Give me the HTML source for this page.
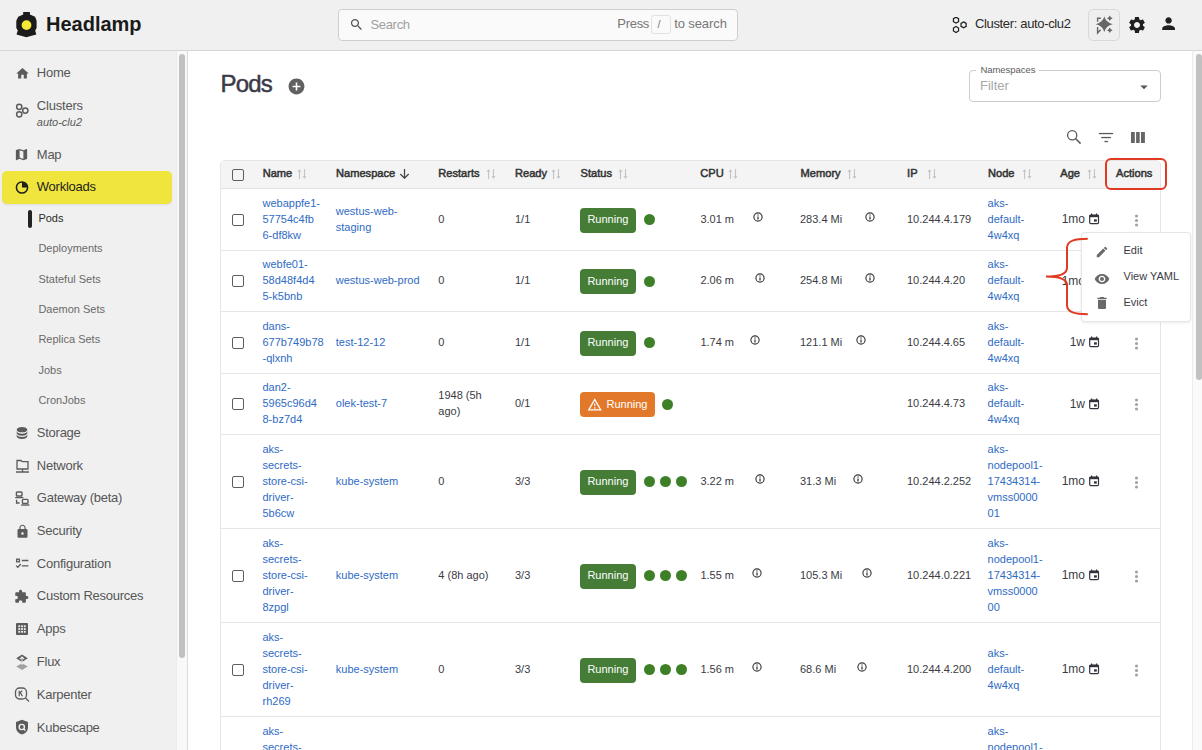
<!DOCTYPE html>
<html><head><meta charset="utf-8"><style>
html,body{margin:0;padding:0;width:1202px;height:750px;overflow:hidden;background:#fff;font-family:"Liberation Sans", sans-serif;}
.a{position:absolute;}
.t{position:absolute;white-space:pre;}
</style></head><body>
<div class="a" style="left:0px;top:0px;width:1202px;height:50px;background:#f0f0f0;"></div>
<div class="a" style="left:0px;top:50px;width:1202px;height:1px;background:#d6d6d6;"></div>
<svg class="a" style="left:12px;top:8px" width="30" height="32" viewBox="0 0 30 32" fill="#5f5f5f"><path d="M11.2 4.1H17.9V6.4L23.1 8.8L24.6 12.8V20.1L23.2 22.6L24.3 26.5L14.3 29.2L4.5 26.5L5.8 22.6L4.3 20.1V12.8L6.2 8.8L11.2 6.4Z" fill="#1b1b1b"/><circle cx="14.5" cy="17.1" r="4.9" fill="#f5e837"/></svg>
<div class="t" style="left:46px;top:13.67px;font-size:20px;line-height:20px;color:#1a1a1a;font-weight:700;">Headlamp</div>
<div class="a" style="left:338px;top:9px;width:400px;height:32px;box-sizing:border-box;border:1px solid #cfcfcf;border-radius:4px;background:#fafafa;"></div>
<svg class="a" style="left:348.5px;top:16.7px" width="15.1" height="15.1" viewBox="0 0 24 24" fill="#555"><path d="M15.5 14h-.79l-.28-.27C15.41 12.59 16 11.11 16 9.5 16 5.91 13.09 3 9.5 3S3 5.91 3 9.5 5.91 16 9.5 16c1.61 0 3.09-.59 4.23-1.57l.27.28v.79l5 4.99L20.49 19l-4.99-5zm-6 0C7.01 14 5 11.99 5 9.5S7.01 5 9.5 5 14 7.01 14 9.5 11.99 14 9.5 14z"/></svg>
<div class="t" style="left:370.4px;top:17.50px;font-size:13px;line-height:13px;color:#a0a0a0;letter-spacing:-0.3px;">Search</div>
<div class="t" style="left:617.3px;top:17.30px;font-size:13px;line-height:13px;color:#777;letter-spacing:-0.3px;">Press</div>
<div class="a" style="left:651px;top:15px;width:20px;height:19px;box-sizing:border-box;border:1px solid #e2e2e2;border-radius:3px;background:#fafafa;"></div>
<div class="t" style="left:657.5px;top:19.49px;font-size:11px;line-height:11px;color:#777;">/</div>
<div class="t" style="left:674.2px;top:17.30px;font-size:13px;line-height:13px;color:#777;letter-spacing:-0.1px;">to search</div>
<svg class="a" style="left:950px;top:17px" width="18" height="17" viewBox="0 0 18 17" fill="#5f5f5f"><g fill="none" stroke="#1e1e1e" stroke-width="1.25"><polygon points="6.00,0.25 8.55,1.73 8.55,4.67 6.00,6.15 3.45,4.67 3.45,1.72"/><polygon points="13.60,4.90 16.15,6.38 16.15,9.32 13.60,10.80 11.05,9.32 11.05,6.37"/><polygon points="6.00,9.55 8.55,11.03 8.55,13.97 6.00,15.45 3.45,13.97 3.45,11.03"/></g></svg>
<div class="t" style="left:975px;top:17.10px;font-size:13px;line-height:13px;color:#2a2a2a;letter-spacing:-0.35px;">Cluster: auto-clu2</div>
<div class="a" style="left:1088px;top:9px;width:32px;height:32px;box-sizing:border-box;border:1px solid #d9d9d9;border-radius:5px;background:#efefef;"></div>
<svg class="a" style="left:1090px;top:11px" width="28" height="28" viewBox="0 0 28 28" fill="#5f5f5f"><path d="M14.3 5.6Q15.9 11.6 22.6 13.2Q15.9 14.8 14.3 20.9Q12.7 14.8 5.8 13.2Q12.7 11.6 14.3 5.6z" fill="#666"/><path d="M19.8 4.5Q20.5 6.6 22.7 7.3Q20.5 8 19.8 10.1Q19.1 8 16.9 7.3Q19.1 6.6 19.8 4.5z" fill="#666"/><path d="M19.8 16.4Q20.5 18.5 22.7 19.2Q20.5 19.9 19.8 22Q19.1 19.9 16.9 19.2Q19.1 18.5 19.8 16.4z" fill="#666"/><path d="M7.6 10.8V7.3H10.8" fill="none" stroke="#666" stroke-width="1.4"/><path d="M7.6 16V22L10.6 18.7" fill="none" stroke="#666" stroke-width="1.4"/></svg>
<svg class="a" style="left:1126.5px;top:14.8px" width="20" height="20" viewBox="0 0 24 24" fill="#1f1f1f"><path d="M19.14,12.94c0.04-0.3,0.06-0.61,0.06-0.94c0-0.32-0.02-0.64-0.07-0.94l2.03-1.58c0.18-0.14,0.23-0.41,0.12-0.61 l-1.92-3.32c-0.12-0.22-0.37-0.29-0.59-0.22l-2.39,0.96c-0.5-0.38-1.03-0.7-1.62-0.94L14.4,2.81c-0.04-0.24-0.24-0.41-0.48-0.41 h-3.840c-0.24,0-0.43,0.17-0.47,0.41L9.25,5.35C8.66,5.59,8.12,5.92,7.63,6.29L5.24,5.33c-0.22-0.08-0.47,0-0.59,0.22L2.74,8.87 C2.62,9.08,2.66,9.34,2.86,9.48l2.03,1.58C4.84,11.36,4.8,11.69,4.8,12s0.02,0.64,0.07,0.94l-2.03,1.58 c-0.18,0.14-0.23,0.41-0.12,0.61l1.92,3.32c0.12,0.22,0.37,0.29,0.59,0.22l2.39-0.96c0.5,0.38,1.03,0.7,1.62,0.94l0.36,2.54 c0.05,0.24,0.24,0.41,0.48,0.41h3.84c0.24,0,0.44-0.17,0.47-0.41l0.36-2.54c0.59-0.24,1.13-0.56,1.62-0.94l2.39,0.96 c0.22,0.08,0.47,0,0.59-0.22l1.92-3.32c0.12-0.22,0.07-0.47-0.12-0.61L19.14,12.94z M12,15.6c-1.98,0-3.6-1.62-3.6-3.6 s1.62-3.6,3.6-3.6s3.6,1.62,3.6,3.6S13.98,15.6,12,15.6z"/></svg>
<svg class="a" style="left:1159.2px;top:14px" width="19.2" height="19.2" viewBox="0 0 24 24" fill="#1f1f1f"><path d="M12 12c2.21 0 4-1.790 4-4s-1.79-4-4-4-4 1.79-4 4 1.79 4 4 4zm0 2c-2.67 0-8 1.34-8 4v2h16v-2c0-2.66-5.33-4-8-4z"/></svg>
<div class="a" style="left:0px;top:51px;width:176px;height:699px;background:#f0f0f0;"></div>
<div class="a" style="left:176px;top:51px;width:11px;height:699px;background:#f9f9f9;box-shadow:inset 1px 0 0 #ececec;"></div>
<div class="a" style="left:187px;top:51px;width:1px;height:699px;background:#dcdcdc;"></div>
<div class="a" style="left:179px;top:54px;width:6px;height:604px;background:#c1c1c1;border-radius:3px;"></div>
<div class="t" style="left:36.8px;top:65.80px;font-size:13px;line-height:13px;color:#565656;letter-spacing:-0.25px;">Home</div>
<svg class="a" style="left:14.5px;top:65.8px" width="15" height="15" viewBox="0 0 24 24" fill="#5b5b5b"><path d="M10 20v-6h4v6h5v-8h3L12 3 2 12h3v8z"/></svg>
<div class="t" style="left:36.8px;top:98.60px;font-size:13px;line-height:13px;color:#565656;letter-spacing:-0.2px;">Clusters</div>
<div class="t" style="left:36.8px;top:116.69px;font-size:11px;line-height:11px;color:#5a5a5a;font-style:italic;">auto-clu2</div>
<svg class="a" style="left:15px;top:103px" width="15" height="15" viewBox="0 0 16 16" fill="#5f5f5f"><g fill="none" stroke="#5b5b5b" stroke-width="1.6"><circle cx="4.5" cy="4" r="2.8"/><circle cx="11" cy="8" r="2.8"/><circle cx="4.5" cy="12" r="2.8"/></g></svg>
<div class="t" style="left:36.8px;top:148.00px;font-size:13px;line-height:13px;color:#565656;letter-spacing:-0.25px;">Map</div>
<svg class="a" style="left:14px;top:147.0px" width="15" height="15" viewBox="0 0 24 24" fill="#5b5b5b"><path d="M15,19L9,16.89V5L15,7.11M20.5,3C20.44,3 20.39,3 20.34,3L15,5.1L9,3L3.36,4.9C3.15,4.97 3,5.15 3,5.38V20.5A0.5,0.5 0 0,0 3.5,21C3.55,21 3.61,21 3.66,21L9,18.9L15,21L20.64,19.1C20.85,19 21,18.85 21,18.62V3.5A0.5,0.5 0 0,0 20.5,3Z"/></svg>
<div class="a" style="left:2px;top:171px;width:169.6px;height:33px;background:#efe53d;border-radius:5px;box-shadow:0 1px 2px rgba(0,0,0,.08);"></div>
<div class="t" style="left:36.8px;top:179.90px;font-size:13px;line-height:13px;color:#1e1e1e;letter-spacing:-0.25px;">Workloads</div>
<svg class="a" style="left:15px;top:181px" width="14" height="13" viewBox="0 0 14 13" fill="#5f5f5f"><circle cx="7" cy="6.5" r="5.6" fill="none" stroke="#1e1e1e" stroke-width="1.5"/><path d="M7 6.5V1.2A5.3 5.3 0 0 1 12.3 6.5z" fill="#1e1e1e"/></svg>
<div class="a" style="left:28px;top:210px;width:3.5px;height:18px;background:#222;border-radius:2px;"></div>
<div class="t" style="left:38.4px;top:212.59px;font-size:11px;line-height:11px;color:#2a2a2a;">Pods</div>
<div class="t" style="left:38.4px;top:243.19px;font-size:11px;line-height:11px;color:#6a6a6a;">Deployments</div>
<div class="t" style="left:38.4px;top:273.59px;font-size:11px;line-height:11px;color:#6a6a6a;">Stateful Sets</div>
<div class="t" style="left:38.4px;top:303.99px;font-size:11px;line-height:11px;color:#6a6a6a;">Daemon Sets</div>
<div class="t" style="left:38.4px;top:334.39px;font-size:11px;line-height:11px;color:#6a6a6a;">Replica Sets</div>
<div class="t" style="left:38.4px;top:364.79px;font-size:11px;line-height:11px;color:#6a6a6a;">Jobs</div>
<div class="t" style="left:38.4px;top:395.19px;font-size:11px;line-height:11px;color:#6a6a6a;">CronJobs</div>
<div class="t" style="left:36.8px;top:425.80px;font-size:13px;line-height:13px;color:#565656;letter-spacing:-0.25px;">Storage</div>
<svg class="a" style="left:14px;top:425.3px" width="16" height="16" viewBox="0 0 24 24" fill="#5b5b5b"><path d="M12,3C7.58,3 4,4.79 4,7C4,9.21 7.58,11 12,11C16.42,11 20,9.21 20,7C20,4.79 16.42,3 12,3M4,9V12C4,14.21 7.58,16 12,16C16.42,16 20,14.21 20,12V9C20,11.21 16.42,13 12,13C7.58,13 4,11.21 4,9M4,14V17C4,19.21 7.58,21 12,21C16.42,21 20,19.21 20,17V14C20,16.21 16.42,18 12,18C7.58,18 4,16.21 4,14Z"/></svg>
<div class="t" style="left:36.8px;top:458.50px;font-size:13px;line-height:13px;color:#565656;letter-spacing:-0.25px;">Network</div>
<svg class="a" style="left:14.5px;top:459.2px" width="15" height="15" viewBox="0 0 15 15" fill="#5f5f5f"><path d="M2 1.5h4l1.2 1.2H13v7.3H2z" fill="none" stroke="#5b5b5b" stroke-width="1.3"/><path d="M7.5 10v2.5M1 13h13" stroke="#5b5b5b" stroke-width="1.3"/></svg>
<div class="t" style="left:36.8px;top:490.80px;font-size:13px;line-height:13px;color:#565656;letter-spacing:-0.25px;">Gateway (beta)</div>
<svg class="a" style="left:14px;top:490.0px" width="16" height="16" viewBox="0 0 16 16" fill="#5f5f5f"><g fill="none" stroke="#5b5b5b" stroke-width="1.4"><rect x="2.4" y="2" width="5.6" height="4" rx=".8"/><path d="M1.2 7.6h8.2M2.6 9.8v3.2h3"/><rect x="8.4" y="9.4" width="5.6" height="4" rx=".8"/><path d="M7.2 15h8.2"/></g></svg>
<div class="t" style="left:36.8px;top:523.90px;font-size:13px;line-height:13px;color:#565656;letter-spacing:-0.25px;">Security</div>
<svg class="a" style="left:14.5px;top:523.9px" width="15" height="15" viewBox="0 0 24 24" fill="#5b5b5b"><path d="M18 8h-1V6c0-2.76-2.24-5-5-5S7 3.24 7 6v2H6c-1.1 0-2 .9-2 2v10c0 1.1.9 2 2 2h12c1.1 0 2-.9 2-2V10c0-1.1-.9-2-2-2zm-6 9c-1.1 0-2-.9-2-2s.9-2 2-2 2 .9 2 2-.9 2-2 2zm3.1-9H8.9V6c0-1.71 1.39-3.1 3.1-3.1 1.71 0 3.1 1.39 3.1 3.1v2z"/></svg>
<div class="t" style="left:36.8px;top:556.60px;font-size:13px;line-height:13px;color:#565656;letter-spacing:-0.25px;">Configuration</div>
<svg class="a" style="left:14.5px;top:556.1px" width="15" height="14" viewBox="0 0 15 14" fill="#5f5f5f"><g fill="none" stroke="#5b5b5b" stroke-width="1.3"><rect x="1.6" y="3.2" width="2.8" height="2.6"/><path d="M6.8 4.5h6.6M6.8 9.8h6.6M1.2 9.6l1.6 1.6 3-3.2"/></g></svg>
<div class="t" style="left:36.8px;top:589.30px;font-size:13px;line-height:13px;color:#565656;letter-spacing:-0.25px;">Custom Resources</div>
<svg class="a" style="left:14px;top:589.3px" width="15" height="15" viewBox="0 0 24 24" fill="#5b5b5b"><path d="M20.5 11H19V7c0-1.1-.9-2-2-2h-4V3.5C13 2.12 11.88 1 10.5 1S8 2.12 8 3.5V5H4c-1.1 0-1.99.9-1.99 2v3.8H3.5c1.49 0 2.7 1.21 2.7 2.7s-1.21 2.7-2.7 2.7H2V20c0 1.1.9 2 2 2h3.8v-1.5c0-1.490 1.21-2.7 2.7-2.7 1.49 0 2.7 1.21 2.7 2.7V22H17c1.1 0 2-.9 2-2v-4h1.5c1.38 0 2.5-1.12 2.5-2.5S21.88 11 20.5 11z"/></svg>
<div class="t" style="left:36.8px;top:622.10px;font-size:13px;line-height:13px;color:#565656;letter-spacing:-0.25px;">Apps</div>
<svg class="a" style="left:16px;top:623.4px" width="12" height="12" viewBox="0 0 13 13" fill="#5f5f5f"><rect x="0" y="0" width="13" height="13" rx="1.2" fill="#5b5b5b"/><g fill="#f0f0f0"><rect x="2.5" y="2.5" width="2" height="2"/><rect x="5.5" y="2.5" width="2" height="2"/><rect x="8.5" y="2.5" width="2" height="2"/><rect x="2.5" y="5.5" width="2" height="2"/><rect x="5.5" y="5.5" width="2" height="2"/><rect x="8.5" y="5.5" width="2" height="2"/><rect x="2.5" y="8.5" width="2" height="2"/><rect x="5.5" y="8.5" width="2" height="2"/><rect x="8.5" y="8.5" width="2" height="2"/></g></svg>
<div class="t" style="left:36.8px;top:655.20px;font-size:13px;line-height:13px;color:#565656;letter-spacing:-0.25px;">Flux</div>
<svg class="a" style="left:15px;top:653.7px" width="14" height="16" viewBox="0 0 14 16" fill="#5f5f5f"><path d="M7 0.5L12.8 4.3 7 8.1 1.2 4.3z" fill="#5b5b5b"/><path d="M4.8 5.2L7 3 9.2 5.2" fill="none" stroke="#f0f0f0" stroke-width="1.2"/><path d="M7 9.2L12.8 12.6 7 16 1.2 12.6z" fill="#a0a0a0"/><path d="M7 4v7" stroke="#f0f0f0" stroke-width="1"/></svg>
<div class="t" style="left:36.8px;top:687.90px;font-size:13px;line-height:13px;color:#565656;letter-spacing:-0.25px;">Karpenter</div>
<svg class="a" style="left:13.5px;top:686.4px" width="17" height="16" viewBox="0 0 17 16" fill="#5f5f5f"><g fill="none" stroke="#5b5b5b" stroke-width="1.3"><rect x="1.5" y="2" width="11" height="11" rx="4"/><path d="M11.5 12l3.5 3.5"/></g><path d="M5.2 4.8v5.4M5.2 7.5l3-2.7M6.4 6.6l2 3.6" stroke="#5b5b5b" stroke-width="1.2" fill="none"/></svg>
<div class="t" style="left:36.8px;top:720.60px;font-size:13px;line-height:13px;color:#565656;letter-spacing:-0.25px;">Kubescape</div>
<svg class="a" style="left:15px;top:719.1px" width="14" height="16" viewBox="0 0 14 16" fill="#5f5f5f"><path d="M7 .8L13 3v5.2c0 3.6-2.6 6.4-6 7.2C3.6 14.6 1 11.8 1 8.2V3z" fill="#5b5b5b"/><circle cx="6.8" cy="8" r="2.6" fill="none" stroke="#f0f0f0" stroke-width="1.4"/><path d="M8.5 9.8l1.8 1.8" stroke="#f0f0f0" stroke-width="1.4"/></svg>
<div class="a" style="left:188px;top:51px;width:1004px;height:699px;background:#fff;"></div>
<div class="a" style="left:1192px;top:51px;width:10px;height:699px;background:#fafafa;box-shadow:inset 1px 0 0 #ececec;"></div>
<div class="a" style="left:1196px;top:54px;width:6px;height:326px;background:#c1c1c1;border-radius:3px;"></div>
<div class="t" style="left:220.5px;top:72.08px;font-size:24px;line-height:24px;color:#3b3b48;letter-spacing:-0.8px;-webkit-text-stroke:0.5px #3b3b48;">Pods</div>
<svg class="a" style="left:286.5px;top:76.7px" width="19" height="19" viewBox="0 0 24 24" fill="#616161"><path d="M12 2C6.48 2 2 6.48 2 12s4.48 10 10 10 10-4.48 10-10S17.52 2 12 2zm5 11h-4v4h-2v-4H7v-2h4V7h2v4h4v2z"/></svg>
<div class="a" style="left:969px;top:70px;width:191.5px;height:32px;box-sizing:border-box;border:1px solid #cdcdcd;border-radius:4px;"></div>
<div class="a" style="left:975.5px;top:64px;width:63px;height:10px;background:#fff;"></div>
<div class="t" style="left:980.4px;top:65.16px;font-size:9.5px;line-height:9.5px;color:#5c5c5c;letter-spacing:-0.05px;">Namespaces</div>
<div class="t" style="left:980px;top:78.70px;font-size:13px;line-height:13px;color:#a8a8a8;">Filter</div>
<svg class="a" style="left:1135px;top:77.5px" width="18" height="18" viewBox="0 0 24 24" fill="#555"><path d="M7 10l5 5 5-5z"/></svg>
<svg class="a" style="left:1064px;top:127px" width="20" height="20" viewBox="0 0 20 20" fill="#5f5f5f"><circle cx="8.2" cy="8.2" r="4.6" fill="none" stroke="#5a5a5a" stroke-width="1.3"/><path d="M11.5 11.5L16.6 16.6" stroke="#5a5a5a" stroke-width="1.5"/></svg>
<svg class="a" style="left:1098px;top:132px" width="16" height="11" viewBox="0 0 16 11" fill="#5a5a5a"><rect x="0.9" y="0.9" width="14.2" height="1.3"/><rect x="3.2" y="4.9" width="9.7" height="1.3"/><rect x="6.5" y="8.9" width="3.4" height="1.3"/></svg>
<svg class="a" style="left:1131px;top:132px" width="14" height="11" viewBox="0 0 14 11" fill="#666"><rect x="0" y="0" width="3.8" height="11"/><rect x="5.1" y="0" width="3.6" height="11"/><rect x="10" y="0" width="3.9" height="11"/></svg>
<div class="a" style="left:220px;top:160px;width:941px;height:600px;box-sizing:border-box;border:1px solid #e5e5e5;border-radius:5px 5px 0 0;"></div>
<div class="a" style="left:221px;top:161px;width:939px;height:27px;background:#f4f4f4;border-radius:4px 4px 0 0;"></div>
<div class="a" style="left:221px;top:188px;width:939px;height:1px;background:#e0e0e0;"></div>
<div class="a" style="left:232px;top:169px;width:12px;height:12px;box-sizing:border-box;border:1.6px solid #5e5e5e;border-radius:2px;"></div>
<div class="t" style="left:262.7px;top:167.80px;font-size:11.1px;line-height:11.1px;color:#333;-webkit-text-stroke:0.5px #333;">Name</div>
<svg class="a" style="left:295.0px;top:168px" width="12" height="12" viewBox="0 0 12 12" fill="#5f5f5f"><path d="M4.5 11V3M9.5 1v8" fill="none" stroke="#c4c4c4" stroke-width="1.1"/><path d="M2.4 3.8L4.5 1.2 6.6 3.8zM7.4 8.2L9.5 10.8 11.6 8.2z" fill="#c4c4c4"/></svg>
<div class="t" style="left:336px;top:167.80px;font-size:11.1px;line-height:11.1px;color:#333;-webkit-text-stroke:0.5px #333;">Namespace</div>
<div class="t" style="left:438.3px;top:167.80px;font-size:11.1px;line-height:11.1px;color:#333;-webkit-text-stroke:0.5px #333;">Restarts</div>
<svg class="a" style="left:483.7px;top:168px" width="12" height="12" viewBox="0 0 12 12" fill="#5f5f5f"><path d="M4.5 11V3M9.5 1v8" fill="none" stroke="#c4c4c4" stroke-width="1.1"/><path d="M2.4 3.8L4.5 1.2 6.6 3.8zM7.4 8.2L9.5 10.8 11.6 8.2z" fill="#c4c4c4"/></svg>
<div class="t" style="left:515px;top:167.80px;font-size:11.1px;line-height:11.1px;color:#333;-webkit-text-stroke:0.5px #333;">Ready</div>
<svg class="a" style="left:549.4000000000001px;top:168px" width="12" height="12" viewBox="0 0 12 12" fill="#5f5f5f"><path d="M4.5 11V3M9.5 1v8" fill="none" stroke="#c4c4c4" stroke-width="1.1"/><path d="M2.4 3.8L4.5 1.2 6.6 3.8zM7.4 8.2L9.5 10.8 11.6 8.2z" fill="#c4c4c4"/></svg>
<div class="t" style="left:580.6px;top:167.80px;font-size:11.1px;line-height:11.1px;color:#333;-webkit-text-stroke:0.5px #333;">Status</div>
<svg class="a" style="left:615.7px;top:168px" width="12" height="12" viewBox="0 0 12 12" fill="#5f5f5f"><path d="M4.5 11V3M9.5 1v8" fill="none" stroke="#c4c4c4" stroke-width="1.1"/><path d="M2.4 3.8L4.5 1.2 6.6 3.8zM7.4 8.2L9.5 10.8 11.6 8.2z" fill="#c4c4c4"/></svg>
<div class="t" style="left:700.3px;top:167.80px;font-size:11.1px;line-height:11.1px;color:#333;-webkit-text-stroke:0.5px #333;">CPU</div>
<svg class="a" style="left:725.7px;top:168px" width="12" height="12" viewBox="0 0 12 12" fill="#5f5f5f"><path d="M4.5 11V3M9.5 1v8" fill="none" stroke="#c4c4c4" stroke-width="1.1"/><path d="M2.4 3.8L4.5 1.2 6.6 3.8zM7.4 8.2L9.5 10.8 11.6 8.2z" fill="#c4c4c4"/></svg>
<div class="t" style="left:800.6px;top:167.80px;font-size:11.1px;line-height:11.1px;color:#333;-webkit-text-stroke:0.5px #333;">Memory</div>
<svg class="a" style="left:845.0px;top:168px" width="12" height="12" viewBox="0 0 12 12" fill="#5f5f5f"><path d="M4.5 11V3M9.5 1v8" fill="none" stroke="#c4c4c4" stroke-width="1.1"/><path d="M2.4 3.8L4.5 1.2 6.6 3.8zM7.4 8.2L9.5 10.8 11.6 8.2z" fill="#c4c4c4"/></svg>
<div class="t" style="left:907.1px;top:167.80px;font-size:11.1px;line-height:11.1px;color:#333;-webkit-text-stroke:0.5px #333;">IP</div>
<svg class="a" style="left:925.1px;top:168px" width="12" height="12" viewBox="0 0 12 12" fill="#5f5f5f"><path d="M4.5 11V3M9.5 1v8" fill="none" stroke="#c4c4c4" stroke-width="1.1"/><path d="M2.4 3.8L4.5 1.2 6.6 3.8zM7.4 8.2L9.5 10.8 11.6 8.2z" fill="#c4c4c4"/></svg>
<div class="t" style="left:988px;top:167.80px;font-size:11.1px;line-height:11.1px;color:#333;-webkit-text-stroke:0.5px #333;">Node</div>
<svg class="a" style="left:1020.0px;top:168px" width="12" height="12" viewBox="0 0 12 12" fill="#5f5f5f"><path d="M4.5 11V3M9.5 1v8" fill="none" stroke="#c4c4c4" stroke-width="1.1"/><path d="M2.4 3.8L4.5 1.2 6.6 3.8zM7.4 8.2L9.5 10.8 11.6 8.2z" fill="#c4c4c4"/></svg>
<div class="t" style="left:1060.3px;top:167.80px;font-size:11.1px;line-height:11.1px;color:#333;-webkit-text-stroke:0.5px #333;">Age</div>
<svg class="a" style="left:1085.0px;top:168px" width="12" height="12" viewBox="0 0 12 12" fill="#5f5f5f"><path d="M4.5 11V3M9.5 1v8" fill="none" stroke="#c4c4c4" stroke-width="1.1"/><path d="M2.4 3.8L4.5 1.2 6.6 3.8zM7.4 8.2L9.5 10.8 11.6 8.2z" fill="#c4c4c4"/></svg>
<div class="t" style="left:1116px;top:167.80px;font-size:11.1px;line-height:11.1px;color:#333;-webkit-text-stroke:0.5px #333;">Actions</div>
<svg class="a" style="left:399px;top:168px" width="11" height="11" viewBox="0 0 11 11" fill="#5f5f5f"><path d="M5.5 1V10M1.3 6L5.5 10.2 9.7 6" fill="none" stroke="#444" stroke-width="1.25"/></svg>
<div class="a" style="left:221px;top:250px;width:939px;height:1px;background:#e6e6e6;"></div>
<div class="a" style="left:221px;top:311px;width:939px;height:1px;background:#e6e6e6;"></div>
<div class="a" style="left:221px;top:373px;width:939px;height:1px;background:#e6e6e6;"></div>
<div class="a" style="left:221px;top:434px;width:939px;height:1px;background:#e6e6e6;"></div>
<div class="a" style="left:221px;top:528px;width:939px;height:1px;background:#e6e6e6;"></div>
<div class="a" style="left:221px;top:622px;width:939px;height:1px;background:#e6e6e6;"></div>
<div class="a" style="left:221px;top:716px;width:939px;height:1px;background:#e6e6e6;"></div>
<div class="a" style="left:232px;top:213.7px;width:12px;height:12px;box-sizing:border-box;border:1.6px solid #5e5e5e;border-radius:2px;"></div>
<div class="t" style="left:262.5px;top:197.74px;font-size:11px;line-height:11px;color:#2f6bc4;">webappfe1-</div>
<div class="t" style="left:262.5px;top:213.69px;font-size:11px;line-height:11px;color:#2f6bc4;">57754c4fb</div>
<div class="t" style="left:262.5px;top:229.64px;font-size:11px;line-height:11px;color:#2f6bc4;">6-df8kw</div>
<div class="t" style="left:335.8px;top:205.71px;font-size:11px;line-height:11px;color:#2f6bc4;">westus-web-</div>
<div class="t" style="left:335.8px;top:221.66px;font-size:11px;line-height:11px;color:#2f6bc4;">staging</div>
<div class="t" style="left:438.3px;top:213.69px;font-size:11px;line-height:11px;color:#3b3b43;">0</div>
<div class="t" style="left:515px;top:213.69px;font-size:11px;line-height:11px;color:#3b3b43;">1/1</div>
<div class="a" style="left:580px;top:207.5px;width:56px;height:25px;background:#457c36;border-radius:4px;"></div>
<div class="t" style="left:587.4px;top:214.49px;font-size:11px;line-height:11px;color:#fff;">Running</div>
<div class="a" style="left:643.5px;top:214.29999999999998px;width:11px;height:11px;background:#3e8027;border-radius:50%;"></div>
<div class="t" style="left:700.4px;top:213.89px;font-size:11px;line-height:11px;color:#3b3b43;">3.01 m</div>
<div class="t" style="left:800px;top:213.89px;font-size:11px;line-height:11px;color:#3b3b43;">283.4 Mi</div>
<div class="t" style="left:907px;top:213.89px;font-size:11px;line-height:11px;color:#3b3b43;">10.244.4.179</div>
<div class="t" style="left:987.6px;top:197.74px;font-size:11px;line-height:11px;color:#2f6bc4;">aks-</div>
<div class="t" style="left:987.6px;top:213.69px;font-size:11px;line-height:11px;color:#2f6bc4;">default-</div>
<div class="t" style="left:987.6px;top:229.64px;font-size:11px;line-height:11px;color:#2f6bc4;">4w4xq</div>
<div class="t" style="left:985px;top:213.14px;font-size:12px;line-height:12px;color:#3b3b43;width:100px;text-align:right;">1mo</div>
<svg class="a" style="left:1088px;top:213.2px" width="12" height="12" viewBox="0 0 12 12" fill="#5f5f5f"><rect x="1.7" y="2.1" width="8.8" height="8.6" rx="1.1" fill="none" stroke="#33333d" stroke-width="1.2"/><rect x="1.4" y="1.9" width="9.4" height="2.3" fill="#33333d"/><path d="M3.6 0.6V2.6M8.6 0.6V2.6" stroke="#33333d" stroke-width="1.2"/><rect x="6" y="6.3" width="2.8" height="2.3" fill="#33333d"/></svg>
<svg class="a" style="left:1126.5px;top:210.5px" width="19" height="19" viewBox="0 0 24 24" fill="#a2a2a2"><circle cx="12" cy="6.3" r="2"/><circle cx="12" cy="12" r="2"/><circle cx="12" cy="17.7" r="2"/></svg>
<div class="a" style="left:232px;top:275.2px;width:12px;height:12px;box-sizing:border-box;border:1.6px solid #5e5e5e;border-radius:2px;"></div>
<div class="t" style="left:262.5px;top:259.24px;font-size:11px;line-height:11px;color:#2f6bc4;">webfe01-</div>
<div class="t" style="left:262.5px;top:275.19px;font-size:11px;line-height:11px;color:#2f6bc4;">58d48f4d4</div>
<div class="t" style="left:262.5px;top:291.14px;font-size:11px;line-height:11px;color:#2f6bc4;">5-k5bnb</div>
<div class="t" style="left:335.8px;top:275.19px;font-size:11px;line-height:11px;color:#2f6bc4;">westus-web-prod</div>
<div class="t" style="left:438.3px;top:275.19px;font-size:11px;line-height:11px;color:#3b3b43;">0</div>
<div class="t" style="left:515px;top:275.19px;font-size:11px;line-height:11px;color:#3b3b43;">1/1</div>
<div class="a" style="left:580px;top:269.0px;width:56px;height:25px;background:#457c36;border-radius:4px;"></div>
<div class="t" style="left:587.4px;top:275.99px;font-size:11px;line-height:11px;color:#fff;">Running</div>
<div class="a" style="left:643.5px;top:275.8px;width:11px;height:11px;background:#3e8027;border-radius:50%;"></div>
<div class="t" style="left:700.4px;top:275.39px;font-size:11px;line-height:11px;color:#3b3b43;">2.06 m</div>
<div class="t" style="left:800px;top:275.39px;font-size:11px;line-height:11px;color:#3b3b43;">254.8 Mi</div>
<div class="t" style="left:907px;top:275.39px;font-size:11px;line-height:11px;color:#3b3b43;">10.244.4.20</div>
<div class="t" style="left:987.6px;top:259.24px;font-size:11px;line-height:11px;color:#2f6bc4;">aks-</div>
<div class="t" style="left:987.6px;top:275.19px;font-size:11px;line-height:11px;color:#2f6bc4;">default-</div>
<div class="t" style="left:987.6px;top:291.14px;font-size:11px;line-height:11px;color:#2f6bc4;">4w4xq</div>
<div class="t" style="left:985px;top:274.64px;font-size:12px;line-height:12px;color:#3b3b43;width:100px;text-align:right;">1mo</div>
<svg class="a" style="left:1088px;top:274.7px" width="12" height="12" viewBox="0 0 12 12" fill="#5f5f5f"><rect x="1.7" y="2.1" width="8.8" height="8.6" rx="1.1" fill="none" stroke="#33333d" stroke-width="1.2"/><rect x="1.4" y="1.9" width="9.4" height="2.3" fill="#33333d"/><path d="M3.6 0.6V2.6M8.6 0.6V2.6" stroke="#33333d" stroke-width="1.2"/><rect x="6" y="6.3" width="2.8" height="2.3" fill="#33333d"/></svg>
<svg class="a" style="left:1126.5px;top:272.0px" width="19" height="19" viewBox="0 0 24 24" fill="#a2a2a2"><circle cx="12" cy="6.3" r="2"/><circle cx="12" cy="12" r="2"/><circle cx="12" cy="17.7" r="2"/></svg>
<div class="a" style="left:232px;top:336.7px;width:12px;height:12px;box-sizing:border-box;border:1.6px solid #5e5e5e;border-radius:2px;"></div>
<div class="t" style="left:262.5px;top:320.74px;font-size:11px;line-height:11px;color:#2f6bc4;">dans-</div>
<div class="t" style="left:262.5px;top:336.69px;font-size:11px;line-height:11px;color:#2f6bc4;">677b749b78</div>
<div class="t" style="left:262.5px;top:352.64px;font-size:11px;line-height:11px;color:#2f6bc4;">-qlxnh</div>
<div class="t" style="left:335.8px;top:336.69px;font-size:11px;line-height:11px;color:#2f6bc4;">test-12-12</div>
<div class="t" style="left:438.3px;top:336.69px;font-size:11px;line-height:11px;color:#3b3b43;">0</div>
<div class="t" style="left:515px;top:336.69px;font-size:11px;line-height:11px;color:#3b3b43;">1/1</div>
<div class="a" style="left:580px;top:330.5px;width:56px;height:25px;background:#457c36;border-radius:4px;"></div>
<div class="t" style="left:587.4px;top:337.49px;font-size:11px;line-height:11px;color:#fff;">Running</div>
<div class="a" style="left:643.5px;top:337.3px;width:11px;height:11px;background:#3e8027;border-radius:50%;"></div>
<div class="t" style="left:700.4px;top:336.89px;font-size:11px;line-height:11px;color:#3b3b43;">1.74 m</div>
<div class="t" style="left:800px;top:336.89px;font-size:11px;line-height:11px;color:#3b3b43;">121.1 Mi</div>
<div class="t" style="left:907px;top:336.89px;font-size:11px;line-height:11px;color:#3b3b43;">10.244.4.65</div>
<div class="t" style="left:987.6px;top:320.74px;font-size:11px;line-height:11px;color:#2f6bc4;">aks-</div>
<div class="t" style="left:987.6px;top:336.69px;font-size:11px;line-height:11px;color:#2f6bc4;">default-</div>
<div class="t" style="left:987.6px;top:352.64px;font-size:11px;line-height:11px;color:#2f6bc4;">4w4xq</div>
<div class="t" style="left:985px;top:336.14px;font-size:12px;line-height:12px;color:#3b3b43;width:100px;text-align:right;">1w</div>
<svg class="a" style="left:1088px;top:336.2px" width="12" height="12" viewBox="0 0 12 12" fill="#5f5f5f"><rect x="1.7" y="2.1" width="8.8" height="8.6" rx="1.1" fill="none" stroke="#33333d" stroke-width="1.2"/><rect x="1.4" y="1.9" width="9.4" height="2.3" fill="#33333d"/><path d="M3.6 0.6V2.6M8.6 0.6V2.6" stroke="#33333d" stroke-width="1.2"/><rect x="6" y="6.3" width="2.8" height="2.3" fill="#33333d"/></svg>
<svg class="a" style="left:1126.5px;top:333.5px" width="19" height="19" viewBox="0 0 24 24" fill="#a2a2a2"><circle cx="12" cy="6.3" r="2"/><circle cx="12" cy="12" r="2"/><circle cx="12" cy="17.7" r="2"/></svg>
<div class="a" style="left:232px;top:398.2px;width:12px;height:12px;box-sizing:border-box;border:1.6px solid #5e5e5e;border-radius:2px;"></div>
<div class="t" style="left:262.5px;top:382.24px;font-size:11px;line-height:11px;color:#2f6bc4;">dan2-</div>
<div class="t" style="left:262.5px;top:398.19px;font-size:11px;line-height:11px;color:#2f6bc4;">5965c96d4</div>
<div class="t" style="left:262.5px;top:414.14px;font-size:11px;line-height:11px;color:#2f6bc4;">8-bz7d4</div>
<div class="t" style="left:335.8px;top:398.19px;font-size:11px;line-height:11px;color:#2f6bc4;">olek-test-7</div>
<div class="t" style="left:438.3px;top:390.21px;font-size:11px;line-height:11px;color:#3b3b43;">1948 (5h</div>
<div class="t" style="left:438.3px;top:406.16px;font-size:11px;line-height:11px;color:#3b3b43;">ago)</div>
<div class="t" style="left:515px;top:398.19px;font-size:11px;line-height:11px;color:#3b3b43;">0/1</div>
<div class="a" style="left:580px;top:392.0px;width:75px;height:25px;background:#e2792a;border-radius:4px;"></div>
<svg class="a" style="left:587px;top:396.5px" width="15.5" height="15.5" viewBox="0 0 24 24" fill="#fff"><path d="M12 5.99L19.53 19H4.47L12 5.99M12 2L1 21h22L12 2zm1 14h-2v2h2v-2zm0-6h-2v4h2v-4z"/></svg>
<div class="t" style="left:606.5px;top:398.99px;font-size:11px;line-height:11px;color:#fff;">Running</div>
<div class="a" style="left:662px;top:398.8px;width:11px;height:11px;background:#3e8027;border-radius:50%;"></div>
<div class="t" style="left:907px;top:398.39px;font-size:11px;line-height:11px;color:#3b3b43;">10.244.4.73</div>
<div class="t" style="left:987.6px;top:382.24px;font-size:11px;line-height:11px;color:#2f6bc4;">aks-</div>
<div class="t" style="left:987.6px;top:398.19px;font-size:11px;line-height:11px;color:#2f6bc4;">default-</div>
<div class="t" style="left:987.6px;top:414.14px;font-size:11px;line-height:11px;color:#2f6bc4;">4w4xq</div>
<div class="t" style="left:985px;top:397.64px;font-size:12px;line-height:12px;color:#3b3b43;width:100px;text-align:right;">1w</div>
<svg class="a" style="left:1088px;top:397.7px" width="12" height="12" viewBox="0 0 12 12" fill="#5f5f5f"><rect x="1.7" y="2.1" width="8.8" height="8.6" rx="1.1" fill="none" stroke="#33333d" stroke-width="1.2"/><rect x="1.4" y="1.9" width="9.4" height="2.3" fill="#33333d"/><path d="M3.6 0.6V2.6M8.6 0.6V2.6" stroke="#33333d" stroke-width="1.2"/><rect x="6" y="6.3" width="2.8" height="2.3" fill="#33333d"/></svg>
<svg class="a" style="left:1126.5px;top:395.0px" width="19" height="19" viewBox="0 0 24 24" fill="#a2a2a2"><circle cx="12" cy="6.3" r="2"/><circle cx="12" cy="12" r="2"/><circle cx="12" cy="17.7" r="2"/></svg>
<div class="a" style="left:232px;top:475.7px;width:12px;height:12px;box-sizing:border-box;border:1.6px solid #5e5e5e;border-radius:2px;"></div>
<div class="t" style="left:262.5px;top:443.79px;font-size:11px;line-height:11px;color:#2f6bc4;">aks-</div>
<div class="t" style="left:262.5px;top:459.74px;font-size:11px;line-height:11px;color:#2f6bc4;">secrets-</div>
<div class="t" style="left:262.5px;top:475.69px;font-size:11px;line-height:11px;color:#2f6bc4;">store-csi-</div>
<div class="t" style="left:262.5px;top:491.64px;font-size:11px;line-height:11px;color:#2f6bc4;">driver-</div>
<div class="t" style="left:262.5px;top:507.59px;font-size:11px;line-height:11px;color:#2f6bc4;">5b6cw</div>
<div class="t" style="left:335.8px;top:475.69px;font-size:11px;line-height:11px;color:#2f6bc4;">kube-system</div>
<div class="t" style="left:438.3px;top:475.69px;font-size:11px;line-height:11px;color:#3b3b43;">0</div>
<div class="t" style="left:515px;top:475.69px;font-size:11px;line-height:11px;color:#3b3b43;">3/3</div>
<div class="a" style="left:580px;top:469.5px;width:56px;height:25px;background:#457c36;border-radius:4px;"></div>
<div class="t" style="left:587.4px;top:476.49px;font-size:11px;line-height:11px;color:#fff;">Running</div>
<div class="a" style="left:643.5px;top:476.3px;width:11px;height:11px;background:#3e8027;border-radius:50%;"></div>
<div class="a" style="left:659.5px;top:476.3px;width:11px;height:11px;background:#3e8027;border-radius:50%;"></div>
<div class="a" style="left:675.5px;top:476.3px;width:11px;height:11px;background:#3e8027;border-radius:50%;"></div>
<div class="t" style="left:700.4px;top:475.89px;font-size:11px;line-height:11px;color:#3b3b43;">3.22 m</div>
<div class="t" style="left:800px;top:475.89px;font-size:11px;line-height:11px;color:#3b3b43;">31.3 Mi</div>
<div class="t" style="left:907px;top:475.89px;font-size:11px;line-height:11px;color:#3b3b43;">10.244.2.252</div>
<div class="t" style="left:987.6px;top:443.79px;font-size:11px;line-height:11px;color:#2f6bc4;">aks-</div>
<div class="t" style="left:987.6px;top:459.74px;font-size:11px;line-height:11px;color:#2f6bc4;">nodepool1-</div>
<div class="t" style="left:987.6px;top:475.69px;font-size:11px;line-height:11px;color:#2f6bc4;">17434314-</div>
<div class="t" style="left:987.6px;top:491.64px;font-size:11px;line-height:11px;color:#2f6bc4;">vmss0000</div>
<div class="t" style="left:987.6px;top:507.59px;font-size:11px;line-height:11px;color:#2f6bc4;">01</div>
<div class="t" style="left:985px;top:475.14px;font-size:12px;line-height:12px;color:#3b3b43;width:100px;text-align:right;">1mo</div>
<svg class="a" style="left:1088px;top:475.2px" width="12" height="12" viewBox="0 0 12 12" fill="#5f5f5f"><rect x="1.7" y="2.1" width="8.8" height="8.6" rx="1.1" fill="none" stroke="#33333d" stroke-width="1.2"/><rect x="1.4" y="1.9" width="9.4" height="2.3" fill="#33333d"/><path d="M3.6 0.6V2.6M8.6 0.6V2.6" stroke="#33333d" stroke-width="1.2"/><rect x="6" y="6.3" width="2.8" height="2.3" fill="#33333d"/></svg>
<svg class="a" style="left:1126.5px;top:472.5px" width="19" height="19" viewBox="0 0 24 24" fill="#a2a2a2"><circle cx="12" cy="6.3" r="2"/><circle cx="12" cy="12" r="2"/><circle cx="12" cy="17.7" r="2"/></svg>
<div class="a" style="left:232px;top:569.7px;width:12px;height:12px;box-sizing:border-box;border:1.6px solid #5e5e5e;border-radius:2px;"></div>
<div class="t" style="left:262.5px;top:537.79px;font-size:11px;line-height:11px;color:#2f6bc4;">aks-</div>
<div class="t" style="left:262.5px;top:553.74px;font-size:11px;line-height:11px;color:#2f6bc4;">secrets-</div>
<div class="t" style="left:262.5px;top:569.69px;font-size:11px;line-height:11px;color:#2f6bc4;">store-csi-</div>
<div class="t" style="left:262.5px;top:585.64px;font-size:11px;line-height:11px;color:#2f6bc4;">driver-</div>
<div class="t" style="left:262.5px;top:601.59px;font-size:11px;line-height:11px;color:#2f6bc4;">8zpgl</div>
<div class="t" style="left:335.8px;top:569.69px;font-size:11px;line-height:11px;color:#2f6bc4;">kube-system</div>
<div class="t" style="left:438.3px;top:569.69px;font-size:11px;line-height:11px;color:#3b3b43;">4 (8h ago)</div>
<div class="t" style="left:515px;top:569.69px;font-size:11px;line-height:11px;color:#3b3b43;">3/3</div>
<div class="a" style="left:580px;top:563.5px;width:56px;height:25px;background:#457c36;border-radius:4px;"></div>
<div class="t" style="left:587.4px;top:570.49px;font-size:11px;line-height:11px;color:#fff;">Running</div>
<div class="a" style="left:643.5px;top:570.3000000000001px;width:11px;height:11px;background:#3e8027;border-radius:50%;"></div>
<div class="a" style="left:659.5px;top:570.3000000000001px;width:11px;height:11px;background:#3e8027;border-radius:50%;"></div>
<div class="a" style="left:675.5px;top:570.3000000000001px;width:11px;height:11px;background:#3e8027;border-radius:50%;"></div>
<div class="t" style="left:700.4px;top:569.89px;font-size:11px;line-height:11px;color:#3b3b43;">1.55 m</div>
<div class="t" style="left:800px;top:569.89px;font-size:11px;line-height:11px;color:#3b3b43;">105.3 Mi</div>
<div class="t" style="left:907px;top:569.89px;font-size:11px;line-height:11px;color:#3b3b43;">10.244.0.221</div>
<div class="t" style="left:987.6px;top:537.79px;font-size:11px;line-height:11px;color:#2f6bc4;">aks-</div>
<div class="t" style="left:987.6px;top:553.74px;font-size:11px;line-height:11px;color:#2f6bc4;">nodepool1-</div>
<div class="t" style="left:987.6px;top:569.69px;font-size:11px;line-height:11px;color:#2f6bc4;">17434314-</div>
<div class="t" style="left:987.6px;top:585.64px;font-size:11px;line-height:11px;color:#2f6bc4;">vmss0000</div>
<div class="t" style="left:987.6px;top:601.59px;font-size:11px;line-height:11px;color:#2f6bc4;">00</div>
<div class="t" style="left:985px;top:569.14px;font-size:12px;line-height:12px;color:#3b3b43;width:100px;text-align:right;">1mo</div>
<svg class="a" style="left:1088px;top:569.2px" width="12" height="12" viewBox="0 0 12 12" fill="#5f5f5f"><rect x="1.7" y="2.1" width="8.8" height="8.6" rx="1.1" fill="none" stroke="#33333d" stroke-width="1.2"/><rect x="1.4" y="1.9" width="9.4" height="2.3" fill="#33333d"/><path d="M3.6 0.6V2.6M8.6 0.6V2.6" stroke="#33333d" stroke-width="1.2"/><rect x="6" y="6.3" width="2.8" height="2.3" fill="#33333d"/></svg>
<svg class="a" style="left:1126.5px;top:566.5px" width="19" height="19" viewBox="0 0 24 24" fill="#a2a2a2"><circle cx="12" cy="6.3" r="2"/><circle cx="12" cy="12" r="2"/><circle cx="12" cy="17.7" r="2"/></svg>
<div class="a" style="left:232px;top:663.7px;width:12px;height:12px;box-sizing:border-box;border:1.6px solid #5e5e5e;border-radius:2px;"></div>
<div class="t" style="left:262.5px;top:631.79px;font-size:11px;line-height:11px;color:#2f6bc4;">aks-</div>
<div class="t" style="left:262.5px;top:647.74px;font-size:11px;line-height:11px;color:#2f6bc4;">secrets-</div>
<div class="t" style="left:262.5px;top:663.69px;font-size:11px;line-height:11px;color:#2f6bc4;">store-csi-</div>
<div class="t" style="left:262.5px;top:679.64px;font-size:11px;line-height:11px;color:#2f6bc4;">driver-</div>
<div class="t" style="left:262.5px;top:695.59px;font-size:11px;line-height:11px;color:#2f6bc4;">rh269</div>
<div class="t" style="left:335.8px;top:663.69px;font-size:11px;line-height:11px;color:#2f6bc4;">kube-system</div>
<div class="t" style="left:438.3px;top:663.69px;font-size:11px;line-height:11px;color:#3b3b43;">0</div>
<div class="t" style="left:515px;top:663.69px;font-size:11px;line-height:11px;color:#3b3b43;">3/3</div>
<div class="a" style="left:580px;top:657.5px;width:56px;height:25px;background:#457c36;border-radius:4px;"></div>
<div class="t" style="left:587.4px;top:664.49px;font-size:11px;line-height:11px;color:#fff;">Running</div>
<div class="a" style="left:643.5px;top:664.3000000000001px;width:11px;height:11px;background:#3e8027;border-radius:50%;"></div>
<div class="a" style="left:659.5px;top:664.3000000000001px;width:11px;height:11px;background:#3e8027;border-radius:50%;"></div>
<div class="a" style="left:675.5px;top:664.3000000000001px;width:11px;height:11px;background:#3e8027;border-radius:50%;"></div>
<div class="t" style="left:700.4px;top:663.89px;font-size:11px;line-height:11px;color:#3b3b43;">1.56 m</div>
<div class="t" style="left:800px;top:663.89px;font-size:11px;line-height:11px;color:#3b3b43;">68.6 Mi</div>
<div class="t" style="left:907px;top:663.89px;font-size:11px;line-height:11px;color:#3b3b43;">10.244.4.200</div>
<div class="t" style="left:987.6px;top:647.74px;font-size:11px;line-height:11px;color:#2f6bc4;">aks-</div>
<div class="t" style="left:987.6px;top:663.69px;font-size:11px;line-height:11px;color:#2f6bc4;">default-</div>
<div class="t" style="left:987.6px;top:679.64px;font-size:11px;line-height:11px;color:#2f6bc4;">4w4xq</div>
<div class="t" style="left:985px;top:663.14px;font-size:12px;line-height:12px;color:#3b3b43;width:100px;text-align:right;">1mo</div>
<svg class="a" style="left:1088px;top:663.2px" width="12" height="12" viewBox="0 0 12 12" fill="#5f5f5f"><rect x="1.7" y="2.1" width="8.8" height="8.6" rx="1.1" fill="none" stroke="#33333d" stroke-width="1.2"/><rect x="1.4" y="1.9" width="9.4" height="2.3" fill="#33333d"/><path d="M3.6 0.6V2.6M8.6 0.6V2.6" stroke="#33333d" stroke-width="1.2"/><rect x="6" y="6.3" width="2.8" height="2.3" fill="#33333d"/></svg>
<svg class="a" style="left:1126.5px;top:660.5px" width="19" height="19" viewBox="0 0 24 24" fill="#a2a2a2"><circle cx="12" cy="6.3" r="2"/><circle cx="12" cy="12" r="2"/><circle cx="12" cy="17.7" r="2"/></svg>
<div class="a" style="left:232px;top:757.7px;width:12px;height:12px;box-sizing:border-box;border:1.6px solid #5e5e5e;border-radius:2px;"></div>
<div class="t" style="left:262.5px;top:725.79px;font-size:11px;line-height:11px;color:#2f6bc4;">aks-</div>
<div class="t" style="left:262.5px;top:741.74px;font-size:11px;line-height:11px;color:#2f6bc4;">secrets-</div>
<div class="t" style="left:262.5px;top:757.69px;font-size:11px;line-height:11px;color:#2f6bc4;">store-csi-</div>
<div class="t" style="left:262.5px;top:773.64px;font-size:11px;line-height:11px;color:#2f6bc4;">driver-</div>
<div class="t" style="left:262.5px;top:789.59px;font-size:11px;line-height:11px;color:#2f6bc4;">xxxxx</div>
<div class="t" style="left:335.8px;top:757.69px;font-size:11px;line-height:11px;color:#2f6bc4;">kube-system</div>
<div class="t" style="left:438.3px;top:757.69px;font-size:11px;line-height:11px;color:#3b3b43;">0</div>
<div class="t" style="left:515px;top:757.69px;font-size:11px;line-height:11px;color:#3b3b43;">3/3</div>
<div class="a" style="left:580px;top:751.5px;width:56px;height:25px;background:#457c36;border-radius:4px;"></div>
<div class="t" style="left:587.4px;top:758.49px;font-size:11px;line-height:11px;color:#fff;">Running</div>
<div class="a" style="left:643.5px;top:758.3000000000001px;width:11px;height:11px;background:#3e8027;border-radius:50%;"></div>
<div class="a" style="left:659.5px;top:758.3000000000001px;width:11px;height:11px;background:#3e8027;border-radius:50%;"></div>
<div class="a" style="left:675.5px;top:758.3000000000001px;width:11px;height:11px;background:#3e8027;border-radius:50%;"></div>
<div class="t" style="left:700.4px;top:757.89px;font-size:11px;line-height:11px;color:#3b3b43;">1.50 m</div>
<div class="t" style="left:800px;top:757.89px;font-size:11px;line-height:11px;color:#3b3b43;">70.1 Mi</div>
<div class="t" style="left:907px;top:757.89px;font-size:11px;line-height:11px;color:#3b3b43;">10.244.4.201</div>
<div class="t" style="left:987.6px;top:725.79px;font-size:11px;line-height:11px;color:#2f6bc4;">aks-</div>
<div class="t" style="left:987.6px;top:741.74px;font-size:11px;line-height:11px;color:#2f6bc4;">nodepool1-</div>
<div class="t" style="left:987.6px;top:757.69px;font-size:11px;line-height:11px;color:#2f6bc4;">17434314-</div>
<div class="t" style="left:987.6px;top:773.64px;font-size:11px;line-height:11px;color:#2f6bc4;">vmss0000</div>
<div class="t" style="left:987.6px;top:789.59px;font-size:11px;line-height:11px;color:#2f6bc4;">01</div>
<div class="t" style="left:985px;top:757.14px;font-size:12px;line-height:12px;color:#3b3b43;width:100px;text-align:right;">1mo</div>
<svg class="a" style="left:1088px;top:757.2px" width="12" height="12" viewBox="0 0 12 12" fill="#5f5f5f"><rect x="1.7" y="2.1" width="8.8" height="8.6" rx="1.1" fill="none" stroke="#33333d" stroke-width="1.2"/><rect x="1.4" y="1.9" width="9.4" height="2.3" fill="#33333d"/><path d="M3.6 0.6V2.6M8.6 0.6V2.6" stroke="#33333d" stroke-width="1.2"/><rect x="6" y="6.3" width="2.8" height="2.3" fill="#33333d"/></svg>
<svg class="a" style="left:1126.5px;top:754.5px" width="19" height="19" viewBox="0 0 24 24" fill="#a2a2a2"><circle cx="12" cy="6.3" r="2"/><circle cx="12" cy="12" r="2"/><circle cx="12" cy="17.7" r="2"/></svg>
<svg class="a" style="left:752.8px;top:211.5px" width="10" height="10" viewBox="0 0 10 10" fill="#5f5f5f"><circle cx="5" cy="5" r="4.1" fill="none" stroke="#383838" stroke-width="1.15"/><path d="M5 4.4v3" stroke="#383838" stroke-width="1.3"/><circle cx="5" cy="3" r=".7" fill="#383838"/></svg>
<svg class="a" style="left:864.5px;top:211.5px" width="10" height="10" viewBox="0 0 10 10" fill="#5f5f5f"><circle cx="5" cy="5" r="4.1" fill="none" stroke="#383838" stroke-width="1.15"/><path d="M5 4.4v3" stroke="#383838" stroke-width="1.3"/><circle cx="5" cy="3" r=".7" fill="#383838"/></svg>
<svg class="a" style="left:755.3px;top:273.0px" width="10" height="10" viewBox="0 0 10 10" fill="#5f5f5f"><circle cx="5" cy="5" r="4.1" fill="none" stroke="#383838" stroke-width="1.15"/><path d="M5 4.4v3" stroke="#383838" stroke-width="1.3"/><circle cx="5" cy="3" r=".7" fill="#383838"/></svg>
<svg class="a" style="left:864.5px;top:273.0px" width="10" height="10" viewBox="0 0 10 10" fill="#5f5f5f"><circle cx="5" cy="5" r="4.1" fill="none" stroke="#383838" stroke-width="1.15"/><path d="M5 4.4v3" stroke="#383838" stroke-width="1.3"/><circle cx="5" cy="3" r=".7" fill="#383838"/></svg>
<svg class="a" style="left:749.5px;top:334.5px" width="10" height="10" viewBox="0 0 10 10" fill="#5f5f5f"><circle cx="5" cy="5" r="4.1" fill="none" stroke="#383838" stroke-width="1.15"/><path d="M5 4.4v3" stroke="#383838" stroke-width="1.3"/><circle cx="5" cy="3" r=".7" fill="#383838"/></svg>
<svg class="a" style="left:855.6999999999999px;top:334.5px" width="10" height="10" viewBox="0 0 10 10" fill="#5f5f5f"><circle cx="5" cy="5" r="4.1" fill="none" stroke="#383838" stroke-width="1.15"/><path d="M5 4.4v3" stroke="#383838" stroke-width="1.3"/><circle cx="5" cy="3" r=".7" fill="#383838"/></svg>
<svg class="a" style="left:754.8px;top:473.5px" width="10" height="10" viewBox="0 0 10 10" fill="#5f5f5f"><circle cx="5" cy="5" r="4.1" fill="none" stroke="#383838" stroke-width="1.15"/><path d="M5 4.4v3" stroke="#383838" stroke-width="1.3"/><circle cx="5" cy="3" r=".7" fill="#383838"/></svg>
<svg class="a" style="left:852.8px;top:473.5px" width="10" height="10" viewBox="0 0 10 10" fill="#5f5f5f"><circle cx="5" cy="5" r="4.1" fill="none" stroke="#383838" stroke-width="1.15"/><path d="M5 4.4v3" stroke="#383838" stroke-width="1.3"/><circle cx="5" cy="3" r=".7" fill="#383838"/></svg>
<svg class="a" style="left:751.8px;top:567.5px" width="10" height="10" viewBox="0 0 10 10" fill="#5f5f5f"><circle cx="5" cy="5" r="4.1" fill="none" stroke="#383838" stroke-width="1.15"/><path d="M5 4.4v3" stroke="#383838" stroke-width="1.3"/><circle cx="5" cy="3" r=".7" fill="#383838"/></svg>
<svg class="a" style="left:861.8px;top:567.5px" width="10" height="10" viewBox="0 0 10 10" fill="#5f5f5f"><circle cx="5" cy="5" r="4.1" fill="none" stroke="#383838" stroke-width="1.15"/><path d="M5 4.4v3" stroke="#383838" stroke-width="1.3"/><circle cx="5" cy="3" r=".7" fill="#383838"/></svg>
<svg class="a" style="left:751.8px;top:661.5px" width="10" height="10" viewBox="0 0 10 10" fill="#5f5f5f"><circle cx="5" cy="5" r="4.1" fill="none" stroke="#383838" stroke-width="1.15"/><path d="M5 4.4v3" stroke="#383838" stroke-width="1.3"/><circle cx="5" cy="3" r=".7" fill="#383838"/></svg>
<svg class="a" style="left:856.8px;top:661.5px" width="10" height="10" viewBox="0 0 10 10" fill="#5f5f5f"><circle cx="5" cy="5" r="4.1" fill="none" stroke="#383838" stroke-width="1.15"/><path d="M5 4.4v3" stroke="#383838" stroke-width="1.3"/><circle cx="5" cy="3" r=".7" fill="#383838"/></svg>
<div class="a" style="left:1105px;top:157.5px;width:62px;height:32.5px;box-sizing:border-box;border:2px solid #e03a22;border-radius:6px;"></div>
<div class="a" style="left:1081px;top:232px;width:110px;height:90px;background:#fff;border-radius:4px;box-sizing:border-box;border:1px solid #e6e6e6;box-shadow:0 1px 3px rgba(0,0,0,.08);"></div>
<svg class="a" style="left:1095px;top:245px" width="14" height="14" viewBox="0 0 24 24" fill="#6a6a6a"><path d="M3 17.25V21h3.75L17.81 9.94l-3.75-3.75L3 17.25zM20.71 7.04c.39-.39.39-1.02 0-1.41l-2.34-2.34c-.39-.39-1.02-.39-1.41 0l-1.83 1.83 3.75 3.75 1.83-1.83z"/></svg>
<div class="t" style="left:1123.5px;top:245.49px;font-size:11px;line-height:11px;color:#3b3b43;">Edit</div>
<svg class="a" style="left:1094px;top:271px" width="16" height="16" viewBox="0 0 24 24" fill="#6a6a6a"><path d="M12 4.5C7 4.5 2.73 7.61 1 12c1.73 4.39 6 7.5 11 7.5s9.27-3.11 11-7.5c-1.73-4.39-6-7.5-11-7.5zM12 17c-2.76 0-5-2.24-5-5s2.24-5 5-5 5 2.24 5 5-2.24 5-5 5zm0-8c-1.66 0-3 1.34-3 3s1.34 3 3 3 3-1.34 3-3-1.34-3-3-3z"/></svg>
<div class="t" style="left:1123.5px;top:271.29px;font-size:11px;line-height:11px;color:#3b3b43;">View YAML</div>
<svg class="a" style="left:1094px;top:295px" width="16" height="16" viewBox="0 0 24 24" fill="#6a6a6a"><path d="M6 19c0 1.1.9 2 2 2h8c1.1 0 2-.9 2-2V7H6v12zM19 4h-3.5l-1-1h-5l-1 1H5v2h14V4z"/></svg>
<div class="t" style="left:1123.5px;top:297.09px;font-size:11px;line-height:11px;color:#3b3b43;">Evict</div>
<svg class="a" style="left:1040px;top:234px" width="52" height="84" viewBox="0 0 52 84"><path d="M47.8 4.8C35 4.8 27 6.5 27 14V34C27 40 20 42.5 6 42.5C20 42.5 27 45 27 51V71C27 78.5 35 80.2 47.8 80.2" fill="none" stroke="#e03a22" stroke-width="2"/></svg>
</body></html>
